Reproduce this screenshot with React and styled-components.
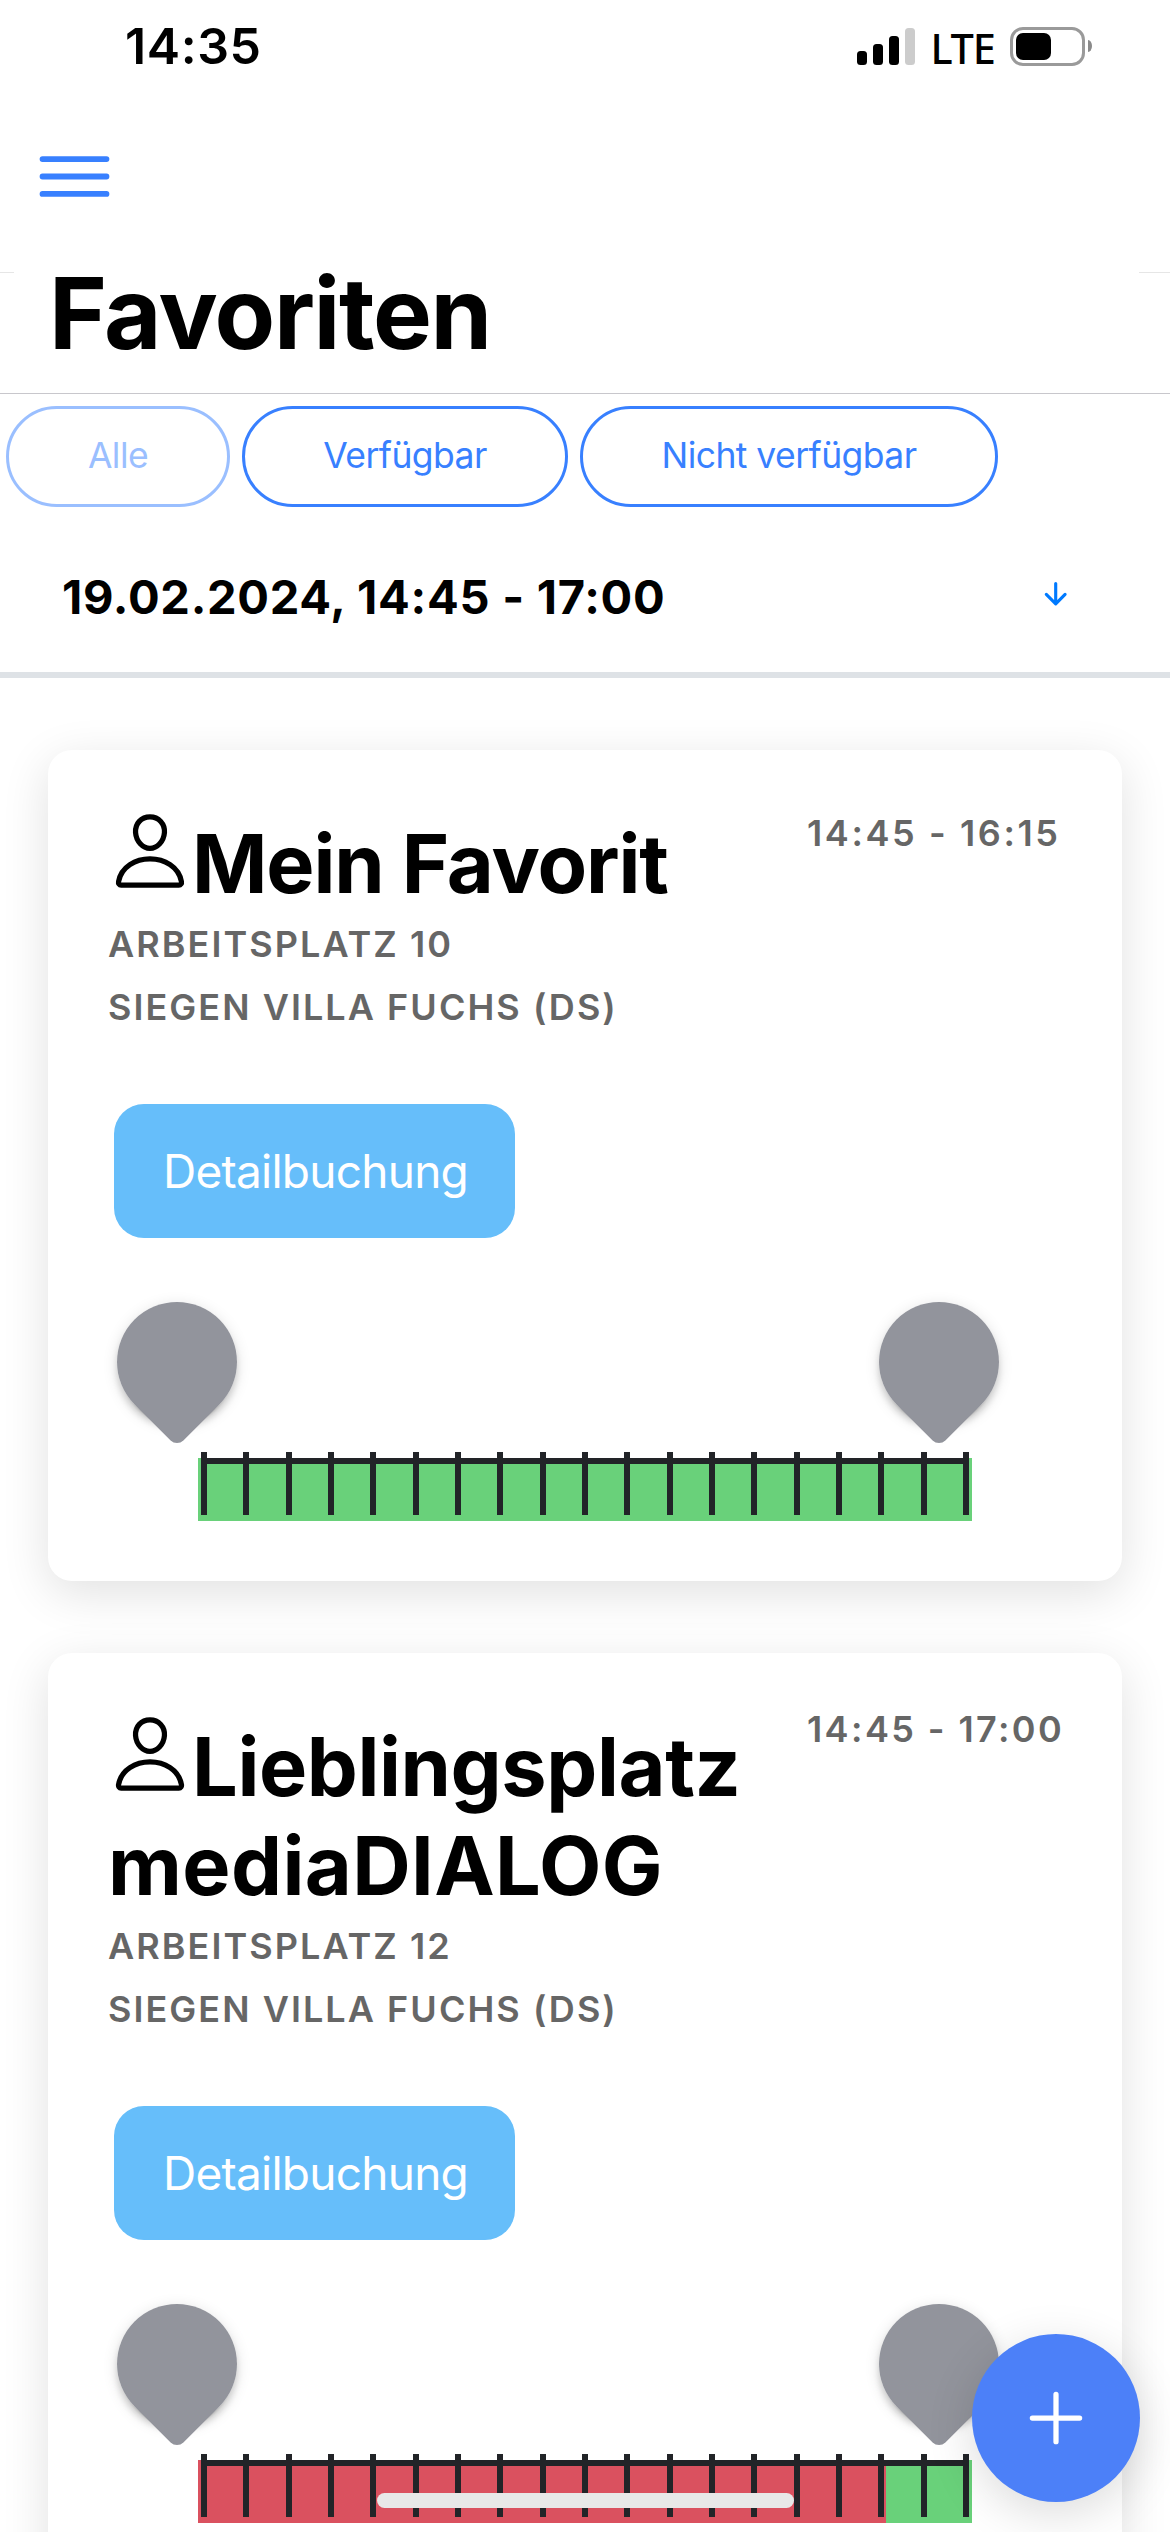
import React from 'react';
import styled, { createGlobalStyle, css } from 'styled-components';
import { IoAdd, IoArrowDown, IoMenuOutline, IoPersonOutline } from 'react-icons/io5';

const GlobalStyle = createGlobalStyle`
  * {
    box-sizing: border-box;
  }

  body {
    margin: 0;
    background: #fff;
    color: #000;
    font-family: Inter, "Liberation Sans", sans-serif;
  }

  button {
    font-family: inherit;
    margin: 0;
    padding: 0;
    border: 0;
    background: none;
  }
`;

const StyledPage = styled.div`
  width: 1170px;
  height: 2532px;
  overflow: hidden;
  display: flex;
  flex-direction: column;
`;

const StyledStatusBar = styled.div`
  flex: none;
  height: 92px;
  padding: 0 78px 0 125px;
  display: flex;
  align-items: center;
  justify-content: space-between;
`;

const StyledClock = styled.div`
  font-size: 50px;
  font-weight: 600;
  letter-spacing: 0.6px;
`;

const StyledStatusIcons = styled.div`
  display: flex;
  align-items: center;
`;

const StyledSignal = styled.div`
  height: 38px;
  display: flex;
  align-items: flex-end;
  gap: 6px;
`;

const StyledSignalBar = styled.div`
  width: 10px;
  height: ${(props) => props.$height}px;
  border-radius: 3.5px;
  background: ${(props) => (props.$active ? '#000' : '#ccc')};
`;

const StyledNetwork = styled.div`
  width: 95px;
  padding-top: 3px;
  text-align: center;
  font-family: "Noto Sans", sans-serif;
  font-size: 41.5px;
  font-weight: 500;
  line-height: 50px;
  letter-spacing: -1.2px;
`;

const StyledBattery = styled.div`
  width: 75px;
  height: 39px;
  padding: 3px;
  border: 3px solid #9a9a9a;
  border-radius: 13px;
`;

const StyledBatteryLevel = styled.div`
  width: 35px;
  height: 27px;
  border-radius: 7px;
  background: #000;
`;

const StyledBatteryCap = styled.div`
  width: 4px;
  height: 12px;
  margin-left: 3px;
  border-radius: 0 4px 4px 0 / 0 6px 6px 0;
  background: #8a8a8a;
`;

const StyledToolbar = styled.div`
  flex: none;
  height: 180px;
  padding: 38px 28px 0;
`;

const StyledMenuButton = styled.button`
  display: block;
  color: #3880ff;
  font-size: 93px;
  line-height: 0;
`;

const StyledHeaderEdge = styled.div`
  flex: none;
  height: 1px;
  display: flex;
  justify-content: space-between;

  &::before,
  &::after {
    content: '';
    width: 14px;
    background: #e6e6e6;
  }

  &::after {
    width: 31px;
  }
`;

const StyledPageTitle = styled.h1`
  flex: none;
  height: 121px;
  margin: 0;
  padding-left: 49px;
  border-bottom: 1px solid #c8c7cc;
  font-size: 99px;
  font-weight: 700;
  line-height: 80px;
  letter-spacing: -1.4px;
`;

const StyledFilters = styled.div`
  flex: none;
  padding: 12px 6px 0;
  display: flex;
  gap: 12px;
`;

const StyledFilter = styled.button`
  width: ${(props) => props.$width}px;
  height: 101px;
  padding-bottom: 2px;
  border: 3px solid #3880ff;
  border-radius: 51px;
  color: #3880ff;
  font-size: 35.5px;
  letter-spacing: -0.55px;
  opacity: ${(props) => (props.disabled ? 0.5 : 1)};
`;

const StyledDateRow = styled.div`
  flex: none;
  height: 171px;
  padding: 14px 98px 0 62px;
  border-bottom: 6px solid #dee2e6;
  display: flex;
  align-items: center;
  justify-content: space-between;
  font-size: 47px;
  font-weight: 650;
  letter-spacing: 0.72px;
`;

const StyledDateArrow = styled(IoArrowDown)`
  margin-top: -6px;
  color: #007aff;
  font-size: 33.4px;
`;

const StyledList = styled.div`
  flex: none;
  padding: 72px 48px;
  display: flex;
  flex-direction: column;
  gap: 72px;
`;

const StyledCard = styled.div`
  padding: 0 60px 60px;
  border-radius: 24px;
  background: #fff;
  box-shadow: 0 12px 48px rgba(0, 0, 0, 0.12);
`;

const StyledCardHeader = styled.div`
  display: flex;
  align-items: flex-start;
`;

const StyledHeading = styled.div`
  flex: none;
  width: 699px;
  padding-top: 59px;
`;

const StyledName = styled.h2`
  margin: 0;
  font-size: 81px;
  font-weight: 700;
  line-height: 99px;

  svg {
    vertical-align: baseline;
    font-size: 84px;
  }
`;

const StyledWord = styled.span`
  letter-spacing: ${(props) => props.$tracking}px;
`;

const labelText = css`
  color: #666;
  font-size: 36px;
  font-weight: 600;
  line-height: 60px;
  white-space: nowrap;
`;

const StyledPlace = styled.div`
  ${labelText}
  margin-bottom: 3px;
  letter-spacing: 2.05px;
  text-transform: uppercase;
`;

const StyledTime = styled.div`
  ${labelText}
  padding-top: ${(props) => (props.$raised ? 46 : 53)}px;
  letter-spacing: ${(props) => (props.$raised ? 2.4 : 2.6)}px;
`;

const StyledDetailButton = styled.button`
  display: block;
  width: 401px;
  height: 134px;
  margin: 64px 0 64px 6px;
  padding-left: 2px;
  border-radius: 30px;
  background: #66befa;
  color: #fff;
  font-size: 46px;
  letter-spacing: -0.75px;
`;

const StyledPins = styled.div`
  height: 156px;
  padding: 0 63px 0 9px;
  display: flex;
  justify-content: space-between;
`;

const StyledPin = styled.div`
  width: 120px;
  height: 120px;
  border-radius: 50%;
  box-shadow: 0 9px 3px -6px rgba(0, 0, 0, 0.2), 0 6px 6px rgba(0, 0, 0, 0.14),
    0 3px 15px rgba(0, 0, 0, 0.12);

  &::before {
    content: '';
    display: block;
    height: 100%;
    border-radius: 50% 50% 50% 9px;
    background: #92949c;
    transform: rotate(-45deg);
  }
`;

const StyledTrack = styled.div`
  width: 774px;
  height: 63px;
  margin-left: 90px;
  padding: 0 3px;
  background: linear-gradient(
    to right,
    #da515f ${(props) => props.$booked}%,
    #69d17a ${(props) => props.$booked}%
  );
`;

const StyledTicks = styled.div`
  border-top: 6px solid #222428;
  display: flex;
  justify-content: space-between;
`;

const StyledTick = styled.div`
  width: 6px;
  height: 63px;
  margin-top: -12px;
  background: #222428;
`;

const StyledFab = styled.button`
  position: fixed;
  top: 2334px;
  left: 972px;
  width: 168px;
  height: 168px;
  display: flex;
  align-items: center;
  justify-content: center;
  border-radius: 50%;
  background: #4c80f8;
  color: #fff;
  font-size: 84px;
  box-shadow: 0 12px 48px rgba(0, 0, 0, 0.14);
`;

const StyledHomeIndicator = styled.div`
  position: fixed;
  top: 2493px;
  left: 377px;
  width: 417px;
  height: 15px;
  border-radius: 8px;
  background: #e8e8e8;
`;

const signalBars = [14, 21, 29, 37];
const ticks = Array.from({ length: 19 }, (_, index) => index);

const filters = [
  { label: 'Alle', width: 224, disabled: true },
  { label: 'Verfügbar', width: 326 },
  { label: 'Nicht verfügbar', width: 418 },
];

const favorites = [
  {
    id: 1,
    words: [{ text: 'Mein Favorit', tracking: -1.1 }],
    place: 'Arbeitsplatz 10',
    location: 'Siegen Villa Fuchs (DS)',
    time: '14:45 - 16:15',
    bookedSlots: 0,
  },
  {
    id: 2,
    words: [
      { text: 'Lieblingsplatz ', tracking: -0.4 },
      { text: 'mediaDIALOG', tracking: 0.4 },
    ],
    place: 'Arbeitsplatz 12',
    location: 'Siegen Villa Fuchs (DS)',
    time: '14:45 - 17:00',
    bookedSlots: 16,
  },
];

const StatusBar = () => (
  <StyledStatusBar>
    <StyledClock>14:35</StyledClock>
    <StyledStatusIcons>
      <StyledSignal>
        {signalBars.map((height, index) => (
          <StyledSignalBar key={height} $height={height} $active={index < 3} />
        ))}
      </StyledSignal>
      <StyledNetwork>LTE</StyledNetwork>
      <StyledBattery>
        <StyledBatteryLevel />
      </StyledBattery>
      <StyledBatteryCap />
    </StyledStatusIcons>
  </StyledStatusBar>
);

const Timeline = ({ bookedSlots }) => (
  <div>
    <StyledPins>
      <StyledPin />
      <StyledPin />
    </StyledPins>
    <StyledTrack $booked={(bookedSlots / 18) * 100}>
      <StyledTicks>
        {ticks.map((tick) => <StyledTick key={tick} />)}
      </StyledTicks>
    </StyledTrack>
  </div>
);

const FavoriteCard = ({ favorite }) => {
  const { words, place, location, time, bookedSlots } = favorite;

  return (
    <StyledCard>
      <StyledCardHeader>
        <StyledHeading>
          <StyledName>
            <IoPersonOutline />
            {words.map(({ text, tracking }) => (
              <StyledWord key={text} $tracking={tracking}>{text}</StyledWord>
            ))}
          </StyledName>
          <StyledPlace>{place}</StyledPlace>
          <StyledPlace>{location}</StyledPlace>
        </StyledHeading>
        <StyledTime $raised={words.length > 1}>{time}</StyledTime>
      </StyledCardHeader>
      <StyledDetailButton>Detailbuchung</StyledDetailButton>
      <Timeline bookedSlots={bookedSlots} />
    </StyledCard>
  );
};

const App = () => (
  <StyledPage>
    <GlobalStyle />
    <StatusBar />
    <StyledToolbar>
      <StyledMenuButton aria-label="Menü">
        <IoMenuOutline />
      </StyledMenuButton>
    </StyledToolbar>
    <StyledHeaderEdge />
    <StyledPageTitle>Favoriten</StyledPageTitle>
    <StyledFilters>
      {filters.map(({ label, width, disabled }) => (
        <StyledFilter key={label} $width={width} disabled={disabled}>{label}</StyledFilter>
      ))}
    </StyledFilters>
    <StyledDateRow>
      <span>19.02.2024, 14:45 - 17:00</span>
      <StyledDateArrow />
    </StyledDateRow>
    <StyledList>
      {favorites.map((favorite) => <FavoriteCard key={favorite.id} favorite={favorite} />)}
    </StyledList>
    <StyledFab aria-label="Hinzufügen">
      <IoAdd />
    </StyledFab>
    <StyledHomeIndicator />
  </StyledPage>
);

export default App;
